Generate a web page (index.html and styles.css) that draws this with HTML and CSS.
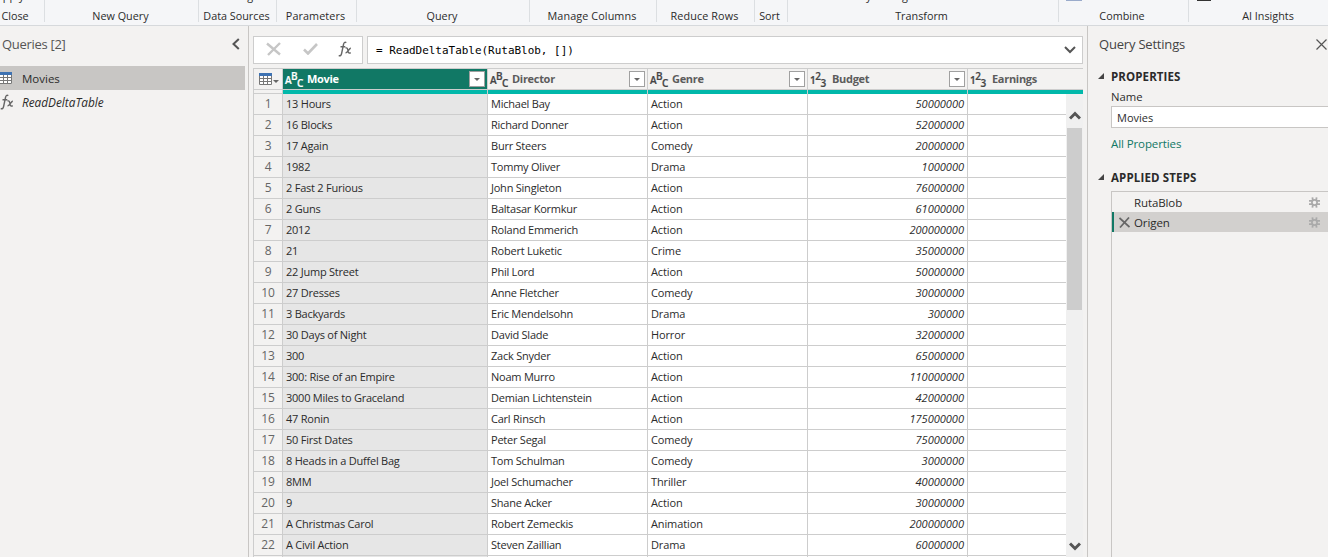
FILE: index.html
```html
<!DOCTYPE html>
<html lang="en">
<head>
<meta charset="utf-8">
<title>Query Editor</title>
<link rel="stylesheet" href="styles.css">
</head>
<body>
<svg class="defs" width="0" height="0">
  <symbol id="table" viewBox="0 0 13 12"><path fill="#fff" d="M0 0h13v12H0z"/><path fill="#3f73b3" d="M0 0h13v3H0z"/><path fill="none" stroke="#777" d="M.5 3v8.500h12V3M4.500 3v8M8.500 3v8M1 5.500h11M1 8.500h11"/></symbol>
  <symbol id="fx" viewBox="0 0 14 16"><path fill="none" stroke="currentColor" stroke-width="1.400" d="M8.300 1.600C6.800.6 5.900 1.700 5.500 3.500L3.600 12.500C3.200 14.600 2 15.400.8 14.400M2.500 5.800h4.800M7.500 7.200c1.600-1 2 .2 2.400 2.200.4 2.200 1 3.400 2.800 2.300M12.900 7.200c-1.800-.3-2.800 4.800-5.400 4.700"/></symbol>
  <symbol id="gear" viewBox="0 0 11 11"><circle cx="5.500" cy="5.500" r="2.600" fill="none" stroke="currentColor" stroke-width="1.700"/><path stroke="currentColor" stroke-width="1.800" d="M3.400.3l.4 2.700M7.600.3l-.4 2.700M3.400 10.700l.4-2.700M7.600 10.700l-.4-2.700M0 3.800h3M8 3.800h3M0 7.200h3M8 7.200h3"/></symbol>
</svg>
<div class="app">
  <header class="ribbon">
    <div class="group g1"><i class="cut">Apply</i>Close</div>
    <div class="group g2">New Query</div>
    <div class="group g3"><i class="cut">settings</i>Data Sources</div>
    <div class="group g4">Parameters</div>
    <div class="group g5">Query</div>
    <div class="group g6">Manage Columns</div>
    <div class="group g7">Reduce Rows</div>
    <div class="group g8">Sort</div>
    <div class="group g9"><i class="cut">y</i><i class="cut second">g</i>Transform</div>
    <div class="group g10"><b class="stub"></b>Combine</div>
    <div class="group g11"><b class="stub"></b>AI Insights</div>
  </header>
  <div class="body">
    <aside class="queries">
      <div class="qhead"><span>Queries [2]</span><svg width="8" height="12"><path d="M6.800 1L1.500 6l5.300 5" fill="none" stroke="#555" stroke-width="2"/></svg></div>
      <div class="query on"><svg width="13" height="12"><use href="#table"/></svg><span>Movies</span></div>
      <div class="query fn"><svg width="14" height="16"><use href="#fx"/></svg><span>ReadDeltaTable</span></div>
    </aside>
    <main class="center">
      <div class="formula">
        <div class="tools">
          <svg width="16" height="14"><path d="M1 1.500l13 11M14 1L2 13" stroke="#c6c6c6" stroke-width="2.400"/></svg>
          <svg width="15" height="12"><path d="M1 6.500l4 4L14 1" fill="none" stroke="#c6c6c6" stroke-width="2.600"/></svg>
          <svg class="fxi" width="14" height="16"><use href="#fx"/></svg>
        </div>
        <div class="field"><code>= ReadDeltaTable(RutaBlob, [])</code><svg width="12" height="8"><path d="M1 1l5 5 5-5" fill="none" stroke="#555" stroke-width="2"/></svg></div>
      </div>
      <div class="grid">
        <div class="heads">
          <div class="corner"><svg width="13" height="12"><use href="#table"/></svg><b class="tri"></b></div>
          <div class="head sel"><span class="ty"><i>A</i><i>B</i><i>C</i></span><span class="nm">Movie</span><b class="drop"></b></div>
          <div class="head"><span class="ty"><i>A</i><i>B</i><i>C</i></span><span class="nm">Director</span><b class="drop"></b></div>
          <div class="head"><span class="ty"><i>A</i><i>B</i><i>C</i></span><span class="nm">Genre</span><b class="drop"></b></div>
          <div class="head"><span class="ty num"><i>1</i><i>2</i><i>3</i></span><span class="nm">Budget</span><b class="drop"></b></div>
          <div class="head"><span class="ty num"><i>1</i><i>2</i><i>3</i></span><span class="nm">Earnings</span></div>
        </div>
        <div class="quality"><i></i><i></i><i></i><i></i><i></i><i></i></div>
        <div class="data">
          <div class="rows" id="rows"></div>
          <div class="scroll">
            <svg width="12" height="9"><path d="M1 7.500l5-5 5 5" fill="none" stroke="#555" stroke-width="3"/></svg>
            <div class="thumb"></div>
            <svg class="down" width="12" height="9"><path d="M1 1.500l5 5 5-5" fill="none" stroke="#555" stroke-width="3"/></svg>
          </div>
        </div>
      </div>
    </main>
    <aside class="settings">
      <div class="shead"><span>Query Settings</span><svg width="11" height="11"><path d="M.5.5l10 10M10.500.5l-10 10" stroke="#555" stroke-width="1.200"/></svg></div>
      <h2 class="props"><svg width="7" height="6"><path d="M6 0v6H0z" fill="#444"/></svg><span>PROPERTIES</span></h2>
      <div class="label">Name</div>
      <div class="input">Movies</div>
      <div class="link">All Properties</div>
      <h2 class="steps-h"><svg width="7" height="6"><path d="M6 0v6H0z" fill="#444"/></svg><span>APPLIED STEPS</span></h2>
      <div class="steps">
        <div class="step"><span>RutaBlob</span><svg width="11" height="11"><use href="#gear"/></svg></div>
        <div class="step on"><svg class="del" width="11" height="11"><path d="M.5 1l10 9M10 .5L1 10.500" stroke="#666" stroke-width="1.700"/></svg><span>Origen</span><svg width="11" height="11"><use href="#gear"/></svg></div>
      </div>
    </aside>
  </div>
</div>
<script src="rows.js"></script>
</body>
</html>
```
FILE: rows.js
```js
const movies = `13 Hours|Michael Bay|Action|50000000
16 Blocks|Richard Donner|Action|52000000
17 Again|Burr Steers|Comedy|20000000
1982|Tommy Oliver|Drama|1000000
2 Fast 2 Furious|John Singleton|Action|76000000
2 Guns|Baltasar Kormkur|Action|61000000
2012|Roland Emmerich|Action|200000000
21|Robert Luketic|Crime|35000000
22 Jump Street|Phil Lord|Action|50000000
27 Dresses|Anne Fletcher|Comedy|30000000
3 Backyards|Eric Mendelsohn|Drama|300000
30 Days of Night|David Slade|Horror|32000000
300|Zack Snyder|Action|65000000
300: Rise of an Empire|Noam Murro|Action|110000000
3000 Miles to Graceland|Demian Lichtenstein|Action|42000000
47 Ronin|Carl Rinsch|Action|175000000
50 First Dates|Peter Segal|Comedy|75000000
8 Heads in a Duffel Bag|Tom Schulman|Comedy|3000000
8MM|Joel Schumacher|Thriller|40000000
9|Shane Acker|Action|30000000
A Christmas Carol|Robert Zemeckis|Animation|200000000
A Civil Action|Steven Zaillian|Drama|60000000
|||`.split("\n");
document.getElementById("rows").innerHTML = movies.map((line, i) => {
  const cells = line.split("|").map(c => `<span>${c}</span>`).join("");
  return `<div class="row"><span>${line === "|||" ? "" : i + 1}</span>${cells}<span></span></div>`;
}).join("");
```
FILE: styles.css
```css
* { box-sizing: border-box; }
body { margin: 0; overflow: hidden; font-family: "Open Sans", sans-serif; font-size: 11px; color: #2b2b2b; background: #f3f2f1; }
.defs { position: absolute; }
svg { flex: none; display: block; }
i { font-style: normal; }
.app { width: 1328px; height: 557px; display: flex; flex-direction: column; overflow: hidden; }
.ribbon { height: 26px; flex: none; display: flex; background: #f5f6f8; border-bottom: 1px solid #d6d9dc; }
.group { position: relative; flex: none; height: 22px; border-right: 1px solid #dcdfe2; text-align: center; line-height: 15px; padding: 8px 2px 0 0; white-space: nowrap; font-size: 10.800px; }
.g1 { width: 45px; padding-right: 14px; } .g2 { width: 154px; } .g3 { width: 78px; } .g4 { width: 80px; }
.g5 { width: 173px; } .g6 { width: 127px; } .g7 { width: 98px; } .g8 { width: 33px; padding-right: 3px; } .g9 { width: 271px; padding-right: 3px; }
.g10 { width: 130px; padding-right: 3px; } .g11 { width: 160px; border: 0; padding-right: 2px; }
.g4, .g6, .g7 { letter-spacing: .1px; }
.cut { position: absolute; top: -12px; left: -4px; }
.g3 .cut { left: 20px; }
.g9 .cut { left: 78px; }
.g9 .second { left: 114px; }
.stub { position: absolute; top: 0; left: 7px; width: 16px; height: 1px; background: #9aabcb; }
.g11 .stub { left: 8px; width: 14px; background: #333; }
.body { flex: 1; display: flex; min-height: 0; }
.queries { width: 249px; border-right: 1px solid #c8c6c4; flex: none; }
.qhead { display: flex; justify-content: space-between; align-items: center; height: 40px; padding: 0 8px 4px 2px; font-size: 13px; letter-spacing: -.3px; color: #555; }
.query { height: 24px; width: 245px; display: flex; align-items: center; font-size: 11.500px; }
.query svg { margin-left: -1px; color: #666; }
.query span { margin-left: 10px; }
.query.fn svg { margin-left: 0; }
.query.on { background: #c8c6c4; }
.query.fn span { margin-left: 8px; font-style: italic; font-size: 11.800px; }
.center { width: 838px; flex: none; padding: 10px 4px 0; }
.formula { display: flex; gap: 4px; height: 28px; margin-bottom: 4px; }
.tools { width: 110px; border: 1px solid #cdcdcd; background: #fff; display: flex; align-items: center; padding: 0 10px 2px 12px; justify-content: space-between; }
.fxi { color: #666; }
.field { flex: 1; border: 1px solid #cdcdcd; background: #fff; display: flex; align-items: center; justify-content: space-between; padding: 0 6px 0 8px; }
.field code { font: 10.960px "DejaVu Sans Mono", monospace; color: #000; }
.grid { border-left: 1px solid #cdcdcd; border-top: 1px solid #cdcdcd; }
.heads, .quality, .row { display: grid; grid-template-columns: 29px 205px 160px 160px 160px 1fr; }
.heads { height: 21px; border-bottom: 1px solid #cdcdcd; }
.corner { display: flex; align-items: center; border-right: 1px solid #cdcdcd; padding-left: 5px; }
.tri { border: 3px solid transparent; border-top-color: #666; border-bottom: 0; margin: 5px 0 0 1px; }
.head { display: flex; align-items: center; border-right: 1px solid #cdcdcd; color: #5c5c5c; font-weight: 700; padding: 0 2px; }
.head:last-child { border: 0; }
.head.sel { background: #117865; color: #fff; }
.ty { display: flex; width: 18px; font: 600 10px "Open Sans", sans-serif; color: #444; -webkit-text-stroke: .2px; }
.sel .ty { color: #fff; }
.ty i { width: 6px; flex: none; transform: translateY(1px); }
.ty i:nth-child(2) { transform: translateY(-3px); }
.ty i:nth-child(3) { transform: translateY(4px); }
.num i { width: 5.300px; }
.nm { margin-left: 4px; padding-bottom: 2px; flex: 1; letter-spacing: -.3px; }
.drop { width: 16px; height: 16px; border: 1px solid #a0a0a0; background: #fff; display: flex; align-items: center; justify-content: center; }
.drop::after { content: ""; border: 3px solid transparent; border-top-color: #666; border-bottom: 0; }
.quality { height: 4px; }
.quality i { background: #01b8aa; border-right: 1px solid #cdcdcd; }
.quality i:first-child { background: #f3f2f1; border-bottom: 1px solid #cdcdcd; }
.quality i:last-child { border: 0; }
.data { height: 463px; display: flex; }
.rows { flex: 1; overflow: hidden; }
.row { height: 21px; }
.row span { border-right: 1px solid #cdcdcd; border-bottom: 1px solid #cdcdcd; background: #fff; line-height: 20px; padding-left: 3px; white-space: nowrap; letter-spacing: -.23px; }
.row span:nth-child(1) { background: #f3f2f1; color: #666; text-align: center; padding: 0; font-size: 12px; }
.row span:nth-child(2) { background: #e6e6e6; }
.row span:nth-child(4) { letter-spacing: -.12px; }
.row span:nth-child(5) { text-align: right; padding-right: 3px; font-style: italic; letter-spacing: -.05px; font-size: 11.100px; }
.row span:last-child { border-right: 0; }
.scroll { width: 17px; background: #f0f0f0; display: flex; flex-direction: column; align-items: center; padding: 17px 0 6px; }
.thumb { width: 15px; height: 182px; background: #cdcdcd; margin-top: 8px; }
.down { margin-top: auto; }
.settings { flex: 1; border-left: 1px solid #c8c6c4; min-width: 0; overflow: hidden; }
.shead { height: 36px; padding: 0 1px 0 11px; display: flex; align-items: center; justify-content: space-between; font-size: 13px; letter-spacing: -.2px; color: #444; }
h2 { margin: 0; font-size: 11.500px; display: flex; align-items: center; height: 16px; padding-left: 10px; }
h2 span { margin-left: 6px; }
.props { margin-top: 6px; letter-spacing: .1px; }
.label { margin: 5px 0 0 23px; line-height: 16px; font-size: 11.300px; }
.input { margin: 1px 0 0 23px; border: 1px solid #c8c6c4; border-right: 0; height: 22px; background: #fff; padding-left: 5px; line-height: 21px; }
.link { margin: 8px 0 0 23px; line-height: 16px; color: #117865; font-size: 11.500px; letter-spacing: -.1px; }
.steps-h { margin-top: 17px; letter-spacing: .15px; }
.steps { margin: 6px 0 0 23px; border: 1px solid #c8c6c4; border-right: 0; height: 400px; }
.step { height: 20px; display: flex; align-items: center; padding: 0 8px 0 22px; font-size: 11.500px; }
.step span { flex: 1; letter-spacing: -.1px; }
.step svg { color: #aaa; }
.step.on { background: #d2d0ce; box-shadow: inset 2px 0 #117865; padding-left: 7px; }
.step .del { margin-right: 4px; }
```
